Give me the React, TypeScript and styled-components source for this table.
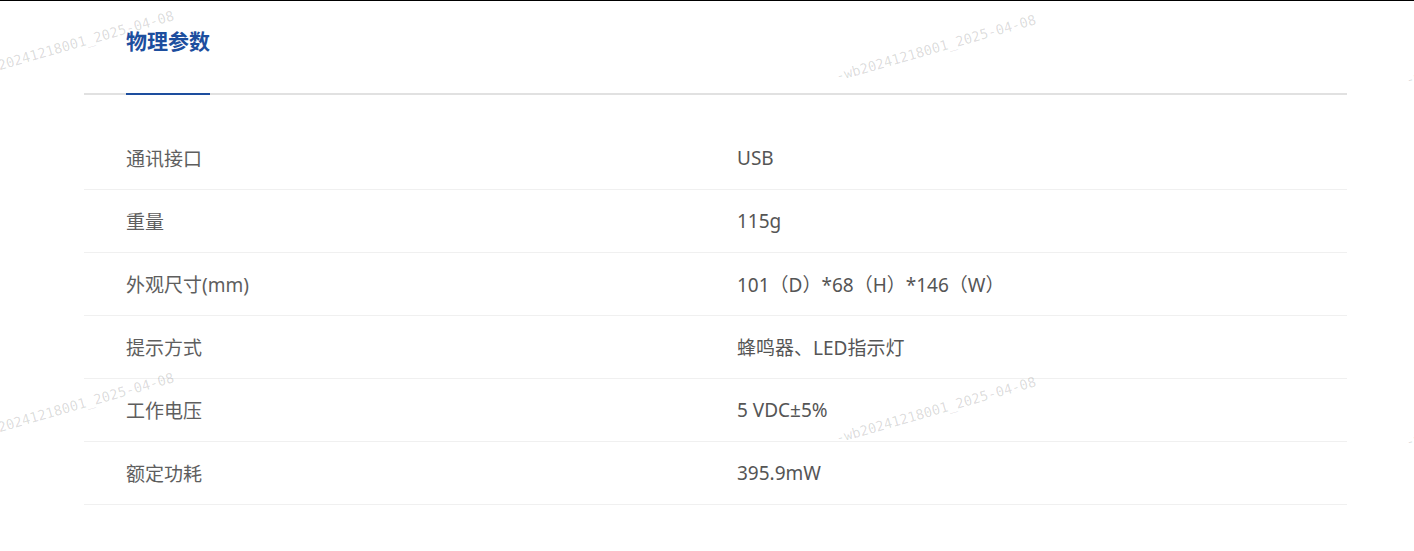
import React from 'react';
import styled, { createGlobalStyle } from 'styled-components';

const GlobalStyle = createGlobalStyle`
  html, body {
    margin: 0;
    padding: 0;
    background: #fff;
  }
  body {
    border-top: 1px solid #000;
    font-family: "Noto Sans", "Noto Sans CJK SC", sans-serif;
  }
`;

const Page = styled.div`
  position: relative;
  min-height: 550px;
  overflow: hidden;
`;

const Section = styled.section`
  margin-left: 84px;
  width: 1263px;
`;

const TabBar = styled.div`
  display: flex;
  padding-left: 42px;
  border-bottom: 2px solid #e1e1e1;
`;

const Tab = styled.div<{ $active?: boolean }>`
  padding: 24px 0 38px;
  margin-bottom: -2px;
  font-family: "Noto Sans CJK SC", sans-serif;
  font-size: 21px;
  line-height: 30px;
  font-weight: 700;
  color: ${(p) => (p.$active ? '#1d4e9e' : '#555')};
  border-bottom: 2px solid ${(p) => (p.$active ? '#1d4e9e' : 'transparent')};
`;

const Table = styled.div`
  margin-top: 32px;
`;

const Row = styled.div`
  display: grid;
  grid-template-columns: 611px 1fr;
  align-items: center;
  height: 62px;
  padding-left: 42px;
  border-bottom: 1px solid #f0f0f0;
  font-size: 19px;
  color: #585858;
`;

const Label = styled.div`
  color: #5e5e5e;
`;

const Value = styled.div`
  color: #555;
`;

const WatermarkLayer = styled.div`
  position: absolute;
  inset: 0;
  pointer-events: none;
  overflow: hidden;
`;

const Mark = styled.span<{ $x: number; $y: number }>`
  position: absolute;
  left: ${(p) => p.$x}px;
  top: ${(p) => p.$y}px;
  transform: rotate(-16deg);
  transform-origin: 0 100%;
  font-family: "DejaVu Sans Mono", monospace;
  font-size: 13.8px;
  line-height: 14px;
  color: rgba(0, 0, 0, 0.15);
  white-space: nowrap;
`;

const specs = [
  ['通讯接口', 'USB'],
  ['重量', '115g'],
  ['外观尺寸(mm)', '101（D）*68（H）*146（W）'],
  ['提示方式', '蜂鸣器、LED指示灯'],
  ['工作电压', '5 VDC±5%'],
  ['额定功耗', '395.9mW'],
];

const marks = [
  { x: -24, y: 64 },
  { x: 838, y: 68 },
  { x: 1408, y: 72 },
  { x: -24, y: 426 },
  { x: 838, y: 430 },
  { x: 1408, y: 434 },
];

export default function App() {
  return (
    <Page>
      <GlobalStyle />
      <Section>
        <TabBar>
          <Tab $active>物理参数</Tab>
        </TabBar>
        <Table>
          {specs.map(([k, v]) => (
            <Row key={k}>
              <Label>{k}</Label>
              <Value>{v}</Value>
            </Row>
          ))}
        </Table>
      </Section>
      <WatermarkLayer>
        {marks.map((m, i) => (
          <Mark key={i} $x={m.x} $y={m.y}>
            -wb20241218001_2025-04-08
          </Mark>
        ))}
      </WatermarkLayer>
    </Page>
  );
}
